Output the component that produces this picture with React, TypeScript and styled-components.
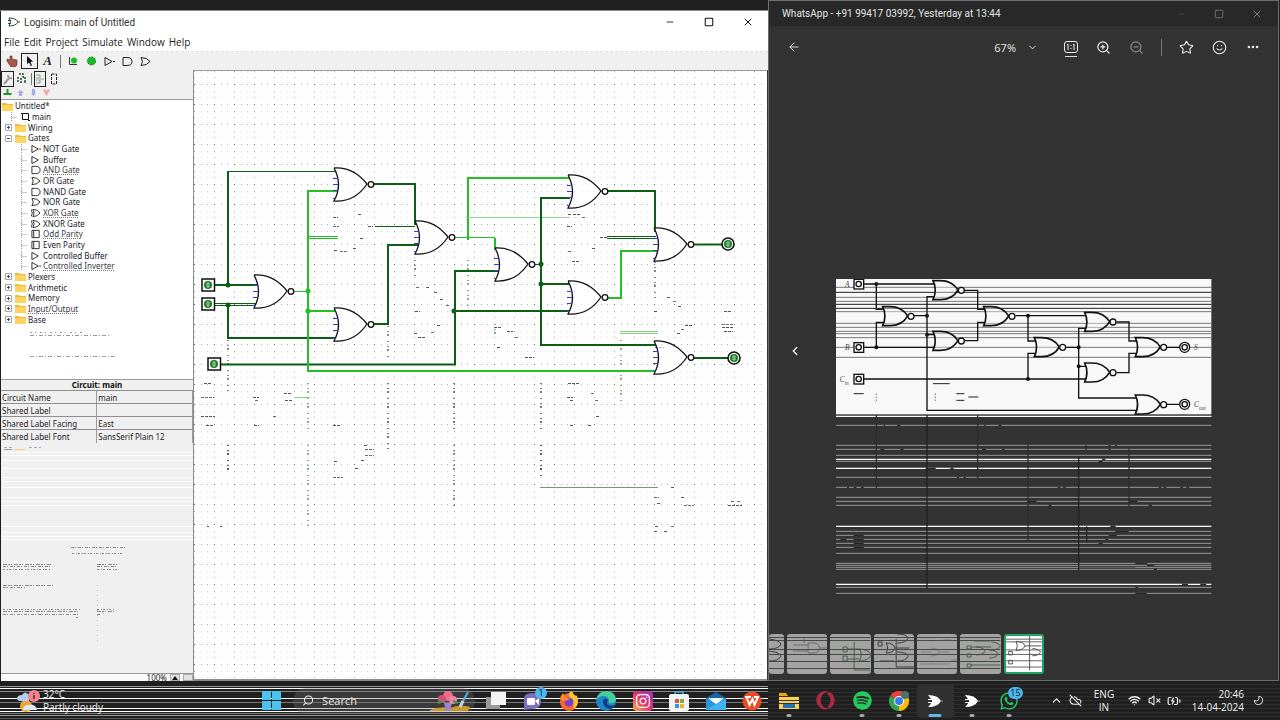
import React from "react";
import styled, { createGlobalStyle, css } from "styled-components";
import { FaSpotify, FaWhatsapp, FaInstagram, FaOpera } from "react-icons/fa";
import { ArrowLeft, ChevronDown, ChevronLeft, ChevronUp, ZoomIn, ZoomOut, Star, Smile, Ellipsis, CloudOff, Wifi, VolumeX, BatteryCharging, Moon, Search, X, Minus, Square } from "lucide-react";

const Global = createGlobalStyle`
  * { box-sizing: border-box; }
  body { margin: 0; background: #202020; font-family: "Open Sans", "Noto Sans", sans-serif; }
  button { font: inherit; color: inherit; background: none; border: 0; padding: 0; margin: 0; }
`;

const Desktop = styled.main`
  min-height: 100vh;
  display: flex;
  flex-direction: column;
  overflow: hidden;
`;
const Windows = styled.div`
  flex: 1;
  display: grid;
  grid-template-columns: 3fr 2fr;
`;

/* ---------- Logisim window ---------- */
const LeftColumn = styled.div`
  display: flex;
  flex-direction: column;
  min-width: 0;
`;
const Behind = styled.div`
  height: 11px;
  padding-left: 10px;
  overflow: hidden;
  background: #202020;
  border-bottom: 1px solid #8a8a8a;
`;
const LogisimWindow = styled.section`
  flex: 1;
  display: flex;
  flex-direction: column;
  margin-left: 1px;
  background: #fff;
  color: #222;
`;
const TitleBar = styled.header`
  height: 22px;
  display: flex;
  align-items: center;
  padding: 0 1px 0 7px;
  gap: 4px;
`;
const TitleText = styled.h1<{ $light?: boolean }>`
  margin: 0;
  flex: 1;
  white-space: nowrap;
  font: 400 10px Roboto, "Open Sans", sans-serif;
  color: ${(p) => (p.$light ? "#e4e4e4" : "#333")};
`;
const Controls = styled.div`
  display: flex;
`;
const WindowButton = styled.button<{ $dim?: boolean }>`
  width: ${(p) => (p.$dim ? 38 : 39)}px;
  height: 22px;
  display: grid;
  place-items: center;
  color: ${(p) => (p.$dim ? "#7a7a7a" : "#111")};
`;
const MenuBar = styled.nav`
  height: 19px;
  display: flex;
  gap: 4px;
  padding-left: 3px;
  align-items: center;
  font-size: 10px;
  border-bottom: 1px dashed #ddd;
`;
const ToolBar = styled.div<{ $h: number; $pad: number }>`
  height: ${(p) => p.$h}px;
  padding-left: ${(p) => p.$pad}px;
  display: flex;
  align-items: center;
  background: #f0f0f0;
`;
const Tool = styled.button<{ $w: number; $on?: boolean }>`
  width: ${(p) => p.$w}px;
  height: 16px;
  display: grid;
  place-items: center;
  ${(p) => p.$on && css`border: 1px solid #222;`}
`;
const TextGlyph = styled.span`
  font: italic bold 13px "Liberation Serif", serif;
`;
const Divider = styled.span<{ $w: number; $h: number }>`
  width: ${(p) => p.$w}px;
  height: ${(p) => p.$h}px;
  background: linear-gradient(#777, #777) center / 1px 100% no-repeat;
`;
const Body = styled.div`
  flex: 1;
  display: flex;
`;
const SidePanel = styled.aside`
  width: 193px;
  flex: none;
  display: flex;
  flex-direction: column;
  background: #f0f0f0;
  border-right: 1px solid #858c95;
  font-family: "Noto Sans", sans-serif;
  font-size: 8px;
`;
const TreeBox = styled.div`
  height: 281px;
  background: #fff;
  border-top: 1px solid #9a9a9a;
  border-bottom: 1px solid #9a9a9a;
  padding-top: 1px;
`;
const Tree = styled.ul`
  list-style: none;
  margin: 0;
  padding: 0;
  height: 224px;
  display: grid;
  grid-template-rows: repeat(21, minmax(0, 1fr));
`;
const TreeRow = styled.li<{ $level: number }>`
  display: flex;
  align-items: center;
  gap: 2px;
  padding-left: ${(p) => [1, 3, 13][p.$level]}px;
  line-height: 10px;
  white-space: nowrap;
  color: #20202c;
`;
const TreeName = styled.span<{ $worn?: boolean }>`
  ${(p) => p.$worn && css`
    text-decoration: underline dotted #777 1px;
    color: #3a3a44;
  `}
`;
const PropertyTable = styled.table`
  width: 100%;
  border-collapse: collapse;
  table-layout: fixed;
  caption {
    height: 10px;
    line-height: 10px;
    font-weight: 700;
    color: #111;
  }
  th, td {
    height: 13px;
    line-height: 11px;
    padding: 0 1px;
    border-top: 1px solid #8d8d8d;
    text-align: left;
    font-weight: 400;
    white-space: nowrap;
    color: #222;
  }
  td { border-left: 1px solid #9a9a9a; border-right: 1px solid #9a9a9a; }
`;
const PanelRest = styled.div`
  flex: 1;
  overflow: hidden;
  svg { display: block; }
`;
const ZoomBar = styled.footer`
  height: 8px;
  display: flex;
  justify-content: flex-end;
  gap: 3px;
  border-top: 1px solid #999;
  background: #fafafa;
  line-height: 7px;
`;
const ZoomStep = styled.button`
  width: 10px;
  height: 7px;
  display: grid;
  place-items: center;
  background: #e3e3e3;
  border: 1px solid #aaa;
`;
const Canvas = styled.div`
  flex: 1;
  display: flex;
  min-width: 0;
  border-top: 1px solid #9a9a9a;
  border-right: 1px solid #333;
  border-bottom: 2px solid #8c8c8c;
  svg { flex: 1; min-width: 0; display: block; }
`;

/* ---------- Picture viewer ---------- */
const Viewer = styled.section`
  display: flex;
  flex-direction: column;
  min-width: 0;
  margin-right: 1px;
  background: #333;
  color: #e8e8e8;
  border: 1px solid #6c6c6c;
`;
const ViewerTitle = styled.header`
  height: 26px;
  display: flex;
  align-items: center;
  background: #282828;
  border-bottom: 1px solid #303030;
  padding: 0 2px 0 13px;
`;
const ViewerTools = styled.div`
  height: 40px;
  display: flex;
  align-items: center;
  padding: 0 9px 0 8px;
`;
const Spacer = styled.span`
  flex: 1;
`;
const ZoomLevel = styled.div`
  display: flex;
  align-items: center;
  padding-right: 5px;
  font-size: 11px;
`;
const ViewerTool = styled.button<{ $dim?: boolean; $mark?: boolean }>`
  width: 33px;
  height: 20px;
  display: grid;
  place-items: center;
  color: ${(p) => (p.$dim ? "#8a8a8a" : "#eee")};
  ${(p) => p.$mark && css`background: linear-gradient(#ddd, #ddd) center bottom / 12px 1px no-repeat;`}
`;
const Stage = styled.div`
  flex: 1;
  display: grid;
  grid-template-columns: 52px 1fr 52px;
  align-items: start;
  justify-items: center;
  padding-top: 212px;
`;
const PrevButton = styled.button`
  width: 52px;
  height: 144px;
  display: grid;
  place-items: center;
`;
const FilmStrip = styled.div`
  width: 275px;
  height: 46px;
  display: grid;
  grid-template-columns: 15px repeat(6, 1fr);
  gap: 3px;
  padding-bottom: 6px;
`;
const Thumb = styled.button<{ $on?: boolean }>`
  overflow: hidden;
  border-radius: 3px;
  background: ${(p) => (p.$on ? "#fff" : "#a3a3a3")};
  ${(p) => p.$on && css`border: 2px solid #1fa463;`}
  svg { display: block; width: 100%; height: 100%; }
`;

/* ---------- Task bar ---------- */
const TaskBar = styled.footer`
  position: relative;
  height: 39px;
  display: flex;
  align-items: center;
  background: #202020;
  color: #f2f2f2;
  > * { position: relative; }
`;
const ScanLines = styled.div`
  && { position: absolute; }
  inset: 0 40% 0 0;
  svg { width: 100%; height: 100%; display: block; }
`;
const FaintLines = styled.div`
  && { position: absolute; }
  inset: 0 0 0 60%;
  background: repeating-linear-gradient(#0000 0 3px, #2e2e2e 3px 4px);
`;
const Weather = styled.button`
  width: 242px;
  padding-left: 17px;
  display: flex;
  gap: 3px;
  align-items: center;
  text-align: left;
  font-size: 10px;
  line-height: 13px;
`;
const StartButton = styled.button`
  width: 51px;
  display: grid;
  justify-items: end;
  padding-right: 12px;
`;
const SearchBox = styled.label`
  width: 182px;
  height: 26px;
  border-radius: 13px;
  display: flex;
  align-items: center;
  gap: 8px;
  padding: 0 4px 0 9px;
  background: #70707055;
  input {
    width: 100px;
    border: 0;
    padding: 0;
    background: none;
    font: 11px "Open Sans", sans-serif;
    color: #eee;
    outline: 0;
  }
  input::placeholder { color: #e6e6e6; opacity: 1; }
`;
const Apps = styled.div`
  width: 549px;
  display: grid;
  grid-template-columns: repeat(15, 1fr);
  margin-left: 3px;
`;
const AppButton = styled.button<{ $run?: boolean; $active?: boolean }>`
  position: relative;
  height: 34px;
  display: grid;
  place-items: center;
  border-radius: 4px;
  ${(p) => p.$active && css`background: #303030;`}
  &::after {
    content: "";
    position: absolute;
    bottom: 1px;
    left: 50%;
    transform: translateX(-50%);
    height: 3px;
    border-radius: 2px;
    width: ${(p) => (p.$active ? 13 : p.$run ? 5 : 0)}px;
    background: ${(p) => (p.$active ? "#60b8e8" : "#a8a8a8")};
  }
`;
const Badge = styled.span<{ $w: number }>`
  position: absolute;
  top: 3px;
  right: 4px;
  width: ${(p) => p.$w}px;
  height: 12px;
  border-radius: 6px;
  background: #4db4ec;
  color: #10222e;
  font-size: 9px;
  line-height: 12px;
  text-align: center;
`;
const Tray = styled.div`
  flex: 1;
  display: flex;
  justify-content: flex-end;
  align-items: center;
  padding-right: 16px;
  font-size: 10px;
  line-height: 13px;
`;
const TrayItem = styled.button<{ $w: number; $end?: boolean }>`
  width: ${(p) => p.$w}px;
  display: grid;
  justify-items: ${(p) => (p.$end ? "end" : "center")};
  white-space: nowrap;
`;

/* ---------- Drawings ---------- */
const miniShapes: Record<string, string> = {
  not: "M1 1 L8 5 L1 9 Z M9 5 h2",
  buf: "M1 1 L8 5 L1 9 Z",
  and: "M1 1 H5 Q10 1 10 5 Q10 9 5 9 H1 Z",
  or: "M1 1 Q7 1 10 5 Q7 9 1 9 Q4 5 1 1 Z",
  xor: "M2 1 Q7 1 10 5 Q7 9 2 9 Q5 5 2 1 M0 1 Q3 5 0 9",
  box: "M1 1 H9 V9 H1 Z M3 1 V9",
};
const Mini = ({ kind, size = 10 }: { kind: string; size?: number }) => (
  <svg width={size} height={size} viewBox="0 0 11 10" fill="none" stroke="#222" strokeWidth="1">
    <path d={miniShapes[kind]} />
  </svg>
);
const Folder = () => (
  <svg width="11" height="9" viewBox="0 0 11 9">
    <path d="M0 1 H4 L5 2 H11 V9 H0 Z" fill="#f0b93c" />
    <path d="M0 3 H11 V9 H0 Z" fill="#ffd45e" />
  </svg>
);
const Expander = ({ open }: { open?: boolean }) => (
  <svg width="9" height="9" viewBox="0 0 9 9" fill="none" stroke="#9ab">
    <path d="M1.500 1.500 H7.500 V7.500 H1.500 Z" />
    <path d={open ? "M3 4.500 H6" : "M3 4.500 H6 M4.500 3 V6"} stroke="#446" />
  </svg>
);
const Branch = () => (
  <svg width="15" height="10" viewBox="0 0 15 10" stroke="#999" strokeDasharray="1 1">
    <path d="M7.500 0 V10 M7.500 5.500 H13" fill="none" />
  </svg>
);

type Item = [number, string, string, boolean?];
const tree: Item[] = [
  [0, "root", "Untitled*"], [1, "main", "main"], [1, "folder", "Wiring"], [1, "open", "Gates"],
  [2, "not", "NOT Gate"], [2, "buf", "Buffer"], [2, "and", "AND Gate", true], [2, "or", "OR Gate"],
  [2, "and", "NAND Gate"], [2, "or", "NOR Gate"], [2, "xor", "XOR Gate", true], [2, "xor", "XNOR Gate"],
  [2, "box", "Odd Parity", true], [2, "box", "Even Parity"], [2, "buf", "Controlled Buffer"],
  [2, "not", "Controlled Inverter", true], [1, "folder", "Plexers"], [1, "folder", "Arithmetic"],
  [1, "folder", "Memory"], [1, "folder", "Input/Output", true], [1, "folder", "Base"],
];
const properties = [["Circuit Name", "main"], ["Shared Label", ""], ["Shared Label Facing", "East"], ["Shared Label Font", "SansSerif Plain 12"]];

const DARK = "#0b5e14";
const LIVE = "#22c022";
const wires: [string, string, number?][] = [
  [DARK, "M214 285 H257"], [DARK, "M228 172 V285"], [DARK, "M227 171.500 H337", 1],
  [DARK, "M214 303.500 H256 M214 305.500 H256", 1], [DARK, "M228 304 V338 H336"],
  [DARK, "M221 364.500 H455 V271 H498"], [DARK, "M455 311 H570"],
  [LIVE, "M294 291.500 H308", 1], [LIVE, "M338 191 H308 V371 H656"], [LIVE, "M308 311 H335"],
  [LIVE, "M308 236.500 H338 M308 238.500 H338", 1],
  [DARK, "M374 184 H415 V225"], [DARK, "M375 226.500 H415", 1], [DARK, "M374 324 H388 V245 H418"],
  [LIVE, "M454 237.500 H495", 1], [LIVE, "M495 238 V250"], [LIVE, "M468 240 V178 H570"],
  ["#8adb8a", "M468 217.500 H570", 1], [DARK, "M534 264.500 H541", 1],
  [DARK, "M570 198 H541 V345 H656"], [DARK, "M541 284 H569"],
  [DARK, "M607 191 H655 V232"], [LIVE, "M607 298 H621 V251 H658"],
  [DARK, "M607 236.500 H656 M607 238.500 H656", 1], [DARK, "M694 244.500 H722"], [DARK, "M694 358 H728"],
  ["#7fd37f", "M620 331.500 H658 M620 333.500 H658", 1], ["#6f9c72", "M540 487.500 H658", 1],
  ["#7fd37f", "M294 397.500 H310", 1],
];
const gates = [[254, 275], [334, 168], [334, 308], [415, 221], [495, 248], [568, 175], [568, 281], [654, 228], [654, 341]];
const trails: [string, number, number, number][] = [
  ["#7a8f7c", 228, 340, 392], ["#4d6b50", 228, 445, 470], ["#6fbf6f", 308, 383, 430], ["#6fbf6f", 308, 445, 527],
  ["#777", 388, 383, 450], ["#777", 454, 383, 430], ["#7a8f7c", 454, 445, 506], ["#777", 541, 383, 430],
  ["#4d6b50", 541, 445, 478], ["#7a8f7c", 415, 260, 280], ["#6fbf6f", 468, 260, 311], ["#7a8f7c", 655, 262, 300],
  ["#7a8f7c", 388, 326, 360], ["#6fbf6f", 621, 340, 402], ["#6fbf6f", 495, 324, 336],
];
const fragments: [number, number, number][] = [
  [333, 226, 6], [333, 217, 5], [358, 214, 3], [334, 250, 3], [340, 251, 7], [353, 248, 3], [360, 238, 3], [368, 226, 5],
  [416, 287, 3], [426, 287, 3], [434, 292, 3], [440, 299, 3], [446, 305, 3], [415, 311, 5], [414, 333, 4], [418, 337, 7], [431, 332, 4], [437, 325, 3],
  [568, 214, 3], [573, 214, 7], [582, 217, 4], [567, 226, 5], [600, 237, 8], [592, 248, 3], [568, 251, 3], [572, 261, 7],
  [494, 327, 8], [507, 331, 6], [515, 337, 3], [497, 347, 3], [525, 357, 9],
  [667, 297, 4], [673, 301, 4], [678, 306, 4], [654, 311, 4], [685, 325, 8], [681, 329, 4], [677, 333, 4], [655, 347, 9],
  [724, 311, 7], [722, 324, 12], [722, 327, 12], [724, 331, 9],
  [204, 383, 7], [201, 397, 13], [201, 416, 14], [206, 425, 8], [253, 397, 6], [255, 400, 3], [254, 425, 5], [284, 393, 8], [285, 400, 8], [273, 416, 3],
  [333, 425, 8], [364, 445, 4], [365, 449, 9], [365, 455, 9], [361, 460, 3], [334, 461, 4], [355, 468, 3], [333, 477, 10],
  [568, 383, 11], [567, 397, 6], [570, 400, 3], [595, 400, 3], [596, 416, 3], [570, 425, 3], [588, 425, 3], [591, 393, 3],
  [671, 487, 3], [654, 497, 5], [681, 497, 3], [684, 505, 10], [657, 503, 3], [728, 505, 14], [731, 501, 3], [737, 501, 3],
  [207, 526, 2], [220, 526, 2], [655, 526, 3], [671, 526, 3], [654, 531, 3], [664, 531, 4],
];
const pins = [[208, 285], [208, 304], [214, 364]];
const leds = [[728, 244], [734, 358]];
const nodes: [number, number, string][] = [[228, 285, DARK], [228, 305, DARK], [308, 291, LIVE], [308, 311, LIVE], [454, 311, DARK], [541, 264, DARK], [541, 284, DARK]];

const Schematic = () => (
  <svg width="100%" role="img" aria-label="Circuit canvas">
    <defs>
      <pattern id="grid" width="20" height="20" patternUnits="userSpaceOnUse" x="194" y="4">
        {[0, 7, 13].map((y) => [0, 7, 13].map((x) => (
          <rect key={`${x}-${y}`} x={x} y={y} width="1" height="1" fill={x === 0 && y === 0 ? "#6d6d6d" : x === 0 || y === 0 ? "#b0b0b0" : "#dcdcdc"} />
        )))}
      </pattern>
    </defs>
    <g transform="translate(-194 -71)" fill="none">
      <rect x="194" y="71" width="100%" height="100%" fill="url(#grid)" />
      {trails.map(([c, x, a, b], i) => <path key={i} d={`M${x} ${a} V${b}`} stroke={c} strokeWidth="2" strokeDasharray="1 4 1 2 2 5" />)}
      {fragments.map(([x, y, w], i) => <path key={i} d={`M${x} ${y + 0.5} h${w}`} stroke={i % 4 === 0 ? "#6a6a8c" : "#555"} strokeDasharray="3 1" />)}
      {wires.map(([c, d, w], i) => <path key={i} d={d} stroke={c} strokeWidth={w ?? 2} />)}
      {nodes.map(([x, y, c], i) => <circle key={i} cx={x} cy={y} r="2.500" fill={c} />)}
      {gates.map(([x, y], i) => (
        <g key={i} transform={`translate(${x} ${y})`}>
          <path d="M0 0 C14 -1 25 6 33 16 C25 28 14 34 0 33 C6 22 6 11 0 0" fill="#fff" fillOpacity="0.600" stroke="#111" strokeWidth="1.300" />
          <path d="M-1 10.500 h5 M-1 16.500 h5 M-1 22.500 h5 M-1 30.500 h3" stroke="#3a3ad8" strokeWidth="1.200" />
          <circle cx="37" cy="16.500" r="2.800" fill="#fff" stroke="#111" strokeWidth="1.300" />
        </g>
      ))}
      {pins.map(([x, y], i) => (
        <g key={i}>
          <rect x={x - 6} y={y - 6} width="12.500" height="12" fill="#fff" stroke="#111" strokeWidth="1.500" />
          <circle cx={x} cy={y} r="4" fill="#1b7a26" />
          <path d={`M${x - 1} ${y - 2} h2 v4 h-2 Z`} stroke="#d8f0d8" strokeWidth="0.800" />
        </g>
      ))}
      {leds.map(([x, y], i) => (
        <g key={i}>
          <circle cx={x} cy={y} r="6" fill="#fff" stroke="#111" strokeWidth="1.600" />
          <circle cx={x} cy={y} r="4" fill="#1b7a26" />
          <path d={`M${x - 1} ${y - 2} h2 v4 h-2 Z`} stroke="#d8f0d8" strokeWidth="0.800" />
        </g>
      ))}
    </g>
  </svg>
);

const photoGates = [[187, 110], [338, 32], [338, 184], [490, 110], [642, 203], [793, 127], [793, 279], [945, 203], [945, 375]];
const photoPins = [[115, 42], [115, 232], [115, 327]];
const photoNodes = [[168, 42], [168, 232], [320, 137], [320, 194], [623, 137], [623, 327], [775, 232], [775, 289]];
const greyLines = [466, 526, 538, 556, 574, 622, 652, 682, 694, 706, 784, 796, 808, 820, 832, 850, 880, 886, 892, 898, 952, 970];
const whiteLines = [439, 568, 595, 769, 943];
const Photo = () => (
  <svg width="376" height="316" viewBox="47 27 1128 948" role="img" aria-label="Full adder built from NOR gates">
    <rect x="47" y="27" width="1126" height="406" fill="#f8f8f8" />
    <g fill="none" strokeWidth="3">
      {[52, 82, 94, 125, 160, 172, 184, 191, 203, 232, 262].map((y) => <path key={y} d={`M47 ${y} H1173`} stroke="#777" />)}
      {[67, 103, 115].map((y) => <path key={y} d={`M47 ${y} H1173`} stroke="#222" />)}
      {greyLines.map((y) => <path key={y} d={`M47 ${y} H1173`} stroke="#999" />)}
      {whiteLines.map((y) => <path key={y} d={`M47 ${y} H1173`} stroke="#fff" strokeWidth="4" />)}
      <path d="M338 341 H388 M100 371 H130 M408 371 H432 M444 381 H474 M408 391 H432" stroke="#222" />
      <path d="M168 371 V395 M345 371 V395" stroke="#333" strokeDasharray="3 6" />
      <path d="M168 435 V655 M472 435 V625 M623 520 V815 M926 535 V710" stroke="#2d2d2d" strokeWidth="4" />
      <path d="M320 435 V955 M775 560 V900" stroke="#222" strokeWidth="4" />
      <path d="M190 466 h4 M230 466 h10 M492 466 h4 M535 466 h8 M180 538 h12 M240 538 h10 M485 538 h12 M545 538 h8 M316 595 h30 M390 595 h10 M410 622 h6 M430 622 h6 M80 652 h6 M100 652 h8 M122 652 h8 M712 652 h8 M728 652 h8 M1015 652 h8 M1030 652 h8 M1080 652 h8 M1098 652 h8 M622 694 h26 M925 694 h26 M685 706 h8 M985 706 h10 M865 526 h6 M884 526 h5 M865 538 h6 M845 568 h10 M835 574 h12 M885 784 h40 M870 769 h16 M865 796 h24 M797 526 v14 M799 769 v50 M855 808 h8 M835 820 h12 M100 796 h30 M60 808 h18 M100 808 h30 M100 820 h30 M100 832 h30 M945 880 h36 M980 886 h22 M1000 898 h10 M945 970 h34 M945 952 h8 M1085 943 h18 M1140 943 h18" stroke="#262626" strokeWidth="4" />
      <path d="M775 892 H945" stroke="#555" />
    </g>
    <g fill="none" stroke="#111" strokeWidth="4">
      <path d="M130 42 H345 M168 42 V118 H192 M168 232 V157 H192 M130 232 H345" />
      <path d="M281 137 H320 M343 80 H320 V421 H950 M320 194 H343" />
      <path d="M434 61 H472 V118 H495 M434 212 H472 V157 H495" />
      <path d="M586 137 H798 M623 137 V213 H648 M130 327 H798 M623 327 V250 H648" />
      <path d="M738 232 H775 M798 175 H775 V384 H950 M775 289 H798" />
      <path d="M889 156 H926 V213 H950 M889 308 H926 V250 H950 M1040 232 H1078 M1040 403 H1078" />
      {photoGates.map(([x, y], i) => (
        <g key={i} transform={`translate(${x} ${y})`}>
          <path d="M0 0 H22 C48 0 65 12 75 28 C65 45 48 57 22 57 H0 C9 38 9 19 0 0 Z" fill="#f8f8f8" fillOpacity="0.400" strokeWidth="5" />
          <circle cx="85" cy="29" r="9" fill="#f8f8f8" />
        </g>
      ))}
      {photoPins.map(([x, y], i) => <g key={i}><rect x={x - 14} y={y - 14} width="29" height="29" fill="#f8f8f8" /><circle cx={x} cy={y} r="8" /></g>)}
      {[[1093, 232], [1093, 403]].map(([x, y], i) => <g key={i}><circle cx={x} cy={y} r="15" fill="#f8f8f8" /><circle cx={x} cy={y} r="8" /></g>)}
      {photoNodes.map(([x, y], i) => <circle key={i} cx={x} cy={y} r="4" />)}
    </g>
    <g fill="#444" fontFamily="Liberation Serif, serif" fontStyle="italic" fontSize="22">
      <text x="74" y="50">A</text>
      <text x="74" y="240">B</text>
      <text x="58" y="335">C<tspan fontSize="16" dy="9">in</tspan></text>
      <text x="1121" y="240">S</text>
      <text x="1121" y="410">C<tspan fontSize="16" dy="9">out</tspan></text>
    </g>
  </svg>
);

const thumbPaths = [
  "M0 5 Q10 6 12 10 Q10 15 0 15 M0 17 Q10 18 12 22 Q10 27 0 27",
  "M21 9 h5 q6 0 6 5 t-6 5 h-5 Z M6 11 h15 M6 17 h15 M32 14 h8 M17 4 v5",
  "M29 15 q9 0 12 6 q-3 6 -12 6 q4 -6 0 -12 M13 13 h4 v5 h-4 Z M13 22 h4 v5 h-4 Z M17 15 h12 M17 25 h12 M24 8 v28 h16",
  "M12 9 q7 0 9 5 q-2 5 -9 5 q3 -5 0 -10 M23 0 q9 0 11 4 q-2 5 -11 5 M23 18 q9 0 11 4 q-2 5 -11 5 M21 14 h14 M4 8 h4 v4 h-4 Z M22 5 v28 h18 M6 27 h14",
  "M14 14 q6 0 8 4 q-2 4 -8 4 M4 18 h10 M22 18 h10 M26 6 h8 M3 30 h30 M34 26 h6",
  "M16 13 q7 0 9 4 q-2 4 -9 4 M31 8 q7 0 9 4 q-2 4 -9 4 M29 16 q7 0 9 4 q-2 4 -9 4 M7 12 h4 v3 h-4 Z M7 20 h4 v3 h-4 Z M7 30 h4 v3 h-4 Z M11 13 h20 M11 31 h29 M14 7 h16",
  "M11 6 q8 0 10 5 q-2 5 -10 5 q3 -5 0 -10 M29 14 q7 0 9 4 q-2 4 -9 4 M3 17 h4 v4 h-4 Z M3 27 h4 v4 h-4 Z M26 0 v38 M21 11 h18",
];
const ThumbArt = ({ n }: { n: number }) => (
  <svg viewBox={n ? "0 0 40 40" : "0 0 15 40"} preserveAspectRatio="none" fill="none">
    <path d={thumbPaths[n]} stroke={["#333", "#666", "#41593f", "#333", "#7a7a7a", "#41593f", "#333"][n]} strokeWidth="0.900" />
    <path d="M0 3.500 H40 M0 6.500 H40 M0 15.500 H40 M0 20.500 H40 M0 27.500 H40 M0 34.500 H40" stroke={n === 6 ? "#555" : "#484848"} />
  </svg>
);

const NorLogo = () => (
  <svg width="16" height="12" viewBox="0 0 16 12"><path d="M1 0 Q11 0 14 6 Q11 12 1 12 Q4 9 4 8 H1 V7 H5 V5 H1 V4 H4 Z" fill="#fff" /><path d="M14 6 h2" stroke="#888" /></svg>
);
const Chrome = () => (
  <svg width="20" height="20" viewBox="0 0 20 20">
    <path d="M10 10 L1.300 5 A10 10 0 0 1 18.700 5 Z" fill="#e94235" />
    <path d="M10 10 L18.700 5 A10 10 0 0 1 10 20 Z" fill="#fbbd0a" />
    <path d="M10 10 L10 20 A10 10 0 0 1 1.300 5 Z" fill="#34a352" />
    <circle cx="10" cy="10" r="5" fill="#fff" /><circle cx="10" cy="10" r="4" fill="#3b7ded" />
    <circle cx="16" cy="4" r="4" fill="#4c7372" />
  </svg>
);
const appIcons: { name: string; icon: React.ReactNode; run?: boolean; active?: boolean; badge?: string }[] = [
  { name: "Task view", icon: <svg width="20" height="20"><rect x="0" y="6" width="14" height="12" fill="#9a9a9a" /><rect x="5" y="1" width="15" height="13" fill="#f4f4f4" /></svg> },
  { name: "Chat", badge: "1", icon: <svg width="20" height="20"><path d="M1 19 V8 Q1 2 9 2 Q18 2 18 10 Q18 18 9 18 Z" fill="#7c6cc4" /><rect x="4" y="7" width="8" height="7" rx="1" fill="#fff" /><path d="M12 10 l4 -3 v7 Z" fill="#fff" /></svg> },
  { name: "Firefox", icon: <svg width="20" height="20"><circle cx="10" cy="11" r="9" fill="#f9682b" /><path d="M10 2 L13 0 L15 4 L18 5 Q21 14 14 18 Q16 10 10 8 Z" fill="#fdc52d" /><circle cx="10" cy="11" r="4.500" fill="#7a3fd0" /><path d="M1 8 Q2 4 4 2 L6 6 L11 8 Q8 10 5 10 Z" fill="#fb8d22" /></svg> },
  { name: "Edge", icon: <svg width="20" height="20"><circle cx="10" cy="10" r="10" fill="#1d85cc" /><path d="M0 9 Q2 0 11 0 Q20 1 20 9 Q19 13 13 12 Q14 6 8 5 Q3 5 0 9" fill="#45cf9c" /><path d="M7 9 Q6 16 14 18 Q18 17 19 14 Q14 16 11 13 Q11 10 12 9 Q10 6 7 9" fill="#10407c" /></svg> },
  { name: "Instagram", icon: <svg width="20" height="20"><defs><linearGradient id="insta" x1="0" y1="1" x2="1" y2="0"><stop offset="0" stopColor="#fcb045" /><stop offset="0.500" stopColor="#e1306c" /><stop offset="1" stopColor="#8a3ac8" /></linearGradient></defs><rect width="20" height="20" rx="4" fill="url(#insta)" /><FaInstagram x="2" y="2" size={16} color="#fff" /></svg> },
  { name: "Store", icon: <svg width="20" height="20"><path d="M6 5 V1 H14 V5" fill="none" stroke="#40b4e8" strokeWidth="1.500" /><rect y="3" width="20" height="17" rx="2" fill="#f3f3f3" /><path d="M6 8 h4 v4 h-4Z" fill="#e2523a" /><path d="M11 8 h4 v4 h-4Z" fill="#7cb332" /><path d="M6 13 h4 v4 h-4Z" fill="#2f9ce0" /><path d="M11 13 h4 v4 h-4Z" fill="#f2b32a" /></svg> },
  { name: "Mail", icon: <svg width="20" height="20"><path d="M0 7 L10 1 L20 7 V19 H0 Z" fill="#1563a8" /><path d="M2 7 H18 L10 14 Z" fill="#f2f8fc" /><path d="M0 7 L20 19 H0 Z" fill="#2596dc" /><path d="M20 7 L0 19 H20 Z" fill="#3fb4ee" /></svg> },
  { name: "WPS Office", icon: <svg width="20" height="20"><circle cx="10" cy="10" r="9.500" fill="#ec4b23" /><path d="M3 6 H9 M4.500 6 L7.500 14 L10.500 8 L12.500 14 L16 6 H12" fill="none" stroke="#fff" strokeWidth="2" /></svg> },
  { name: "File Explorer", run: true, icon: <svg width="20" height="18"><path d="M0 1 H7 L9 4 H20 V17 H0Z" fill="#e9a820" /><path d="M0 5 H20 V17 H0Z" fill="#fbd152" /><rect x="4" y="12" width="12" height="4" fill="#2372b4" /><path d="M0 4.500 H20 M0 8.500 H20 M0 11.500 H20" stroke="#333" /></svg> },
  { name: "Opera", icon: <FaOpera size={19} color="#a82a46" /> },
  { name: "Spotify", run: true, icon: <FaSpotify size={19} color="#24cc5c" /> },
  { name: "Chrome", run: true, icon: <Chrome /> },
  { name: "Logisim", active: true, icon: <NorLogo /> },
  { name: "Logisim circuit", run: true, icon: <NorLogo /> },
  { name: "WhatsApp", run: true, badge: "15", icon: <FaWhatsapp size={20} color="#25c768" /> },
];

const TreeLine = ({ item: [level, kind, name, worn] }: { item: Item }) => (
  <TreeRow $level={level}>
    {level === 0 && <Folder />}
    {level === 1 && kind !== "main" && <><Expander open={kind === "open"} /><Folder /></>}
    {level === 1 && kind === "main" && <><Branch /><svg width="9" height="9"><path d="M1.500 1.500 h6 v6 h-6 Z M0 1.500 h2 M7 8.500 h2" fill="none" stroke="#111" /></svg></>}
    {level === 2 && <><Branch /><Mini kind={kind} /></>}
    <TreeName $worn={worn}>{name}</TreeName>
  </TreeRow>
);

const panelWhite = [452, 455, 460, 468, 477, 481, 487, 497, 501, 505, 526, 532, 536, 539];
const panelGhosts: [number, number, number][] = [
  [71, 547, 54], [72, 553, 52], [3, 564, 48], [3, 566, 48], [3, 569, 48], [97, 564, 20], [97, 566, 20], [97, 569, 20],
  [3, 585, 50], [3, 587, 22], [3, 609, 77], [3, 611, 77], [3, 614, 77], [97, 609, 17], [97, 611, 17], [97, 614, 3], [76, 617, 4],
];

export default function App() {
  return (
    <>
      <Global />
      <Desktop>
        <Windows>
          <LeftColumn>
            <Behind><svg width="80" height="10"><path d="M0.500 3 V10" stroke="#3d9b78" /><path d="M10 5.500 H58 M10 8.500 H58" stroke="#777" strokeDasharray="3 2 1 2" /></svg></Behind>
            <LogisimWindow>
              <TitleBar>
                <svg width="12" height="10" viewBox="0 0 12 10" fill="none" stroke="#234c2a"><path d="M1 1 Q8 1 10 5 Q8 9 1 9 Q4 5 1 1 M0 3.500 H3 M0 6.500 H3 M10 5 h2" /></svg>
                <TitleText>Logisim: main of Untitled</TitleText>
                <Controls>
                  <WindowButton aria-label="Minimize"><Minus size={10} strokeWidth={2} /></WindowButton>
                  <WindowButton aria-label="Maximize"><Square size={10} strokeWidth={2.5} /></WindowButton>
                  <WindowButton aria-label="Close"><X size={12} strokeWidth={2} /></WindowButton>
                </Controls>
              </TitleBar>
              <MenuBar>
                {["File", "Edit", "Project", "Simulate", "Window", "Help"].map((m) => <button key={m}>{m}</button>)}
              </MenuBar>
              <ToolBar $h={18} $pad={2}>
                <Tool $w={18} aria-label="Poke"><svg width="12" height="12"><path d="M1 4 L4 5 V1 H6 V4 L11 5 V10 L9 12 H5 L1 6 Z" fill="#a45a48" stroke="#5d2d22" strokeWidth="0.600" /></svg></Tool>
                <Tool $w={17} $on aria-label="Select"><svg width="8" height="12"><path d="M1 1 V9 L3 7.500 L5 11 L6 10.500 L4.500 7 L7 6.500 Z" fill="#111" /></svg></Tool>
                <Tool $w={19} aria-label="Text"><TextGlyph>A</TextGlyph></Tool>
                <Divider $w={7} $h={13} />
                <Tool $w={18} aria-label="Input pin"><svg width="11" height="10"><path d="M1.500 1 V8.500 H9" stroke="#333" fill="none" /><circle cx="6" cy="4.500" r="3" fill="#12c021" /></svg></Tool>
                <Tool $w={18} aria-label="Output pin"><svg width="11" height="10"><circle cx="5.500" cy="5" r="4" fill="#12c021" stroke="#3c6b3c" strokeDasharray="2 1" /></svg></Tool>
                <Tool $w={19} aria-label="NOT gate"><Mini kind="not" size={11} /></Tool>
                <Tool $w={17} aria-label="AND gate"><Mini kind="and" size={11} /></Tool>
                <Tool $w={19} aria-label="OR gate"><Mini kind="or" size={11} /></Tool>
              </ToolBar>
              <Body>
                <SidePanel>
                  <ToolBar $h={17} $pad={0}>
                    <Tool $w={13} $on aria-label="Toolbox"><svg width="10" height="12"><path d="M1 11 L6 5 M5 2 Q5 6 9 5" stroke="#9a9a9a" strokeWidth="2" fill="none" /></svg></Tool>
                    <Tool $w={14} aria-label="Simulation"><svg width="11" height="12"><path d="M3 1 h4 v3 h2 v4 M2 4 v6 M5 5 v6 M9 8 v3" stroke="#234c2a" fill="none" strokeDasharray="2 1" strokeWidth="1.500" /></svg></Tool>
                    <Divider $w={6} $h={12} />
                    <Tool $w={12} $on aria-label="Edit circuit"><svg width="10" height="12"><path d="M1 2 h4 v3 h-4 M1 7 h4 v3 h-4 M5 6 h4" stroke="#86a086" fill="none" /></svg></Tool>
                    <Tool $w={15} aria-label="Edit appearance"><svg width="8" height="12"><path d="M1.500 1 H6.500 V11 H1.500 Z" stroke="#222" fill="none" strokeDasharray="3 1" /></svg></Tool>
                  </ToolBar>
                  <ToolBar $h={12} $pad={0}>
                    {["#23902f", "#aaa9ea", "#aaa9ea", "#efa9a4"].map((c, i) => (
                      <Tool key={i} $w={13} aria-label={["Add circuit", "Move up", "Move down", "Remove"][i]}>
                        <svg width="9" height="8"><path d={["M3.500 0 h2 v4 h3 v2 h-8 v-2 h3 Z", "M4.500 1 L8 4 H6 V7 H3 V4 H1 Z", "M3 0 h3 v4 h1 L4.500 7 L2 4 h1 Z", "M1 1 L3 0 L4.500 2 L6 0 L8 1 L4.500 7 Z"][i]} fill={c} /></svg>
                      </Tool>
                    ))}
                  </ToolBar>
                  <TreeBox>
                    <Tree>{tree.map((t) => <TreeLine key={t[2]} item={t} />)}</Tree>
                    <svg width="190" height="48" fill="none" stroke="#999">
                      <path d="M29 7.500 H84" strokeDasharray="2 3 1 4" /><path d="M29 10.500 H110 M29 31.500 H114" strokeDasharray="4 2 1 2" />
                    </svg>
                  </TreeBox>
                  <PropertyTable>
                    <caption>Circuit: main</caption>
                    <tbody>
                      {properties.map(([k, v]) => <tr key={k}><th scope="row">{k}</th><td>{v}</td></tr>)}
                    </tbody>
                  </PropertyTable>
                  <PanelRest>
                    <svg width="192" height="220" fill="none">
                      <g transform="translate(-1 -443)">
                        <path d="M4 447.500 h8 M29 447.500 h12" stroke="#aaa" strokeDasharray="3 2" /><path d="M4 449.500 h8" stroke="#999" /><path d="M15 449.500 h10" stroke="#f0c878" />
                        {panelWhite.map((y) => <path key={y} d={`M2 ${y + 0.5} H193`} stroke="#fff" />)}
                        {panelGhosts.map(([x, y, w], i) => <path key={i} d={`M${x} ${y + 0.5} h${w}`} stroke="#888" strokeDasharray={["3 1 1 2", "2 2 1 1", "4 1 2 1 1 2"][i % 3]} />)}
                        <path d="M97.500 585 V645" stroke="#bbb" strokeDasharray="1 4" />
                      </g>
                    </svg>
                  </PanelRest>
                  <ZoomBar>
                    <span>100%</span>
                    <ZoomStep aria-label="Zoom in"><svg width="6" height="4"><path d="M0 4 L3 0 L6 4 Z" fill="#111" /></svg></ZoomStep>
                    <ZoomStep aria-label="Toggle grid" />
                  </ZoomBar>
                </SidePanel>
                <Canvas><Schematic /></Canvas>
              </Body>
            </LogisimWindow>
          </LeftColumn>

          <Viewer>
            <ViewerTitle>
              <TitleText $light>WhatsApp - +91 99417 03992, Yesterday at 13:44</TitleText>
              <WindowButton $dim aria-label="Minimize"><Minus size={8} strokeWidth={1} /></WindowButton>
              <WindowButton $dim aria-label="Maximize"><Square size={10} strokeWidth={2} /></WindowButton>
              <WindowButton $dim aria-label="Close"><X size={12} strokeWidth={2} /></WindowButton>
            </ViewerTitle>
            <ViewerTools>
              <ViewerTool aria-label="Back"><ArrowLeft size={14} strokeWidth={1.5} /></ViewerTool>
              <Spacer />
              <ZoomLevel>
                <span>67%</span>
                <ViewerTool aria-label="Zoom level"><ChevronDown size={11} strokeWidth={2} /></ViewerTool>
              </ZoomLevel>
              <ViewerTool $mark aria-label="Actual size">
                <svg width="14" height="12" viewBox="0 0 14 12" fill="none" stroke="#eee"><rect x="0.500" y="0.500" width="13" height="11" rx="2.500" /><path d="M4 3 V9 M10 3 V9 M7 4 V5 M7 7 V8 M3 3.500 h1 M9 3.500 h1" /></svg>
              </ViewerTool>
              <ViewerTool aria-label="Zoom in"><ZoomIn size={15} strokeWidth={2} /></ViewerTool>
              <ViewerTool $dim aria-label="Zoom out"><ZoomOut size={15} strokeWidth={2} /></ViewerTool>
              <Divider $w={17} $h={17} />
              <ViewerTool aria-label="Star"><Star size={15} strokeWidth={1.75} /></ViewerTool>
              <ViewerTool aria-label="React"><Smile size={15} strokeWidth={1.75} /></ViewerTool>
              <ViewerTool aria-label="More"><Ellipsis size={14} strokeWidth={2.5} /></ViewerTool>
            </ViewerTools>
            <Stage>
              <PrevButton aria-label="Previous"><ChevronLeft size={14} strokeWidth={2.5} /></PrevButton>
              <Photo />
            </Stage>
            <FilmStrip>
              {thumbPaths.map((_, i) => <Thumb key={i} $on={i === 6} aria-label={`Picture ${i + 1}`}><ThumbArt n={i} /></Thumb>)}
            </FilmStrip>
          </Viewer>
        </Windows>

        <TaskBar>
          <ScanLines>
            <svg fill="none">
              {[[5, "#999"], [7, "#fff"], [10, "#888"], [17, "#fff"], [21, "#777"], [27, "#fff"], [30, "#fff"], [32, "#777"], [34, "#999"], [37, "#555"]].map(([y, c]) => (
                <rect key={y} y={y} width="100%" height="1" fill={String(c)} />
              ))}
            </svg>
          </ScanLines>
          <FaintLines />
          <Weather>
            <svg width="23" height="24">
              <circle cx="9" cy="17" r="6" fill="#f0a63a" /><path d="M0 10 Q0 6 5 6 Q8 1 12 6 V12 H2 Z" fill="#b5cdf2" /><path d="M6 21 Q6 16 12 16 Q19 15 20 21 Z" fill="#dce8f8" />
              <circle cx="17" cy="7" r="6" fill="#f2868f" /><path d="M17 4 v1 M17 6 v4" stroke="#70202a" strokeWidth="1.500" />
            </svg>
            <span>32°C<br />Partly cloudy</span>
          </Weather>
          <StartButton aria-label="Start">
            <svg width="19" height="19"><path d="M0 0 h9 v9 h-9Z M10 0 h9 v9 h-9Z M0 10 h9 v9 h-9Z M10 10 h9 v9 h-9Z" fill="#4cc2f1" /></svg>
          </StartButton>
          <SearchBox>
            <Search size={13} strokeWidth={2} transform="scale(-1 1)" />
            <input placeholder="Search" aria-label="Search" />
            <svg width="44" height="20">
              <path d="M0 19 Q10 15 20 17 Q30 13 40 16 L38 20 H0 Z" fill="#c99a2c" /><path d="M14 12 h8 l-2 8 h-4 Z" fill="#9b83d6" />
              <circle cx="18" cy="5" r="5" fill="#ef6f8b" /><circle cx="12" cy="8" r="4" fill="#d94f74" /><circle cx="23" cy="9" r="4" fill="#e887a0" />
              <path d="M8 12 l5 -2 M28 12 l-5 -2" stroke="#3f9b50" strokeWidth="2" /><path d="M38 1 L32 12" stroke="#4fb3df" strokeWidth="2" /><path d="M33 10 L30 16" stroke="#c8d2d8" strokeWidth="3" />
            </svg>
          </SearchBox>
          <Apps>
            {appIcons.map((a) => (
              <AppButton key={a.name} $run={a.run} $active={a.active} aria-label={a.name}>
                {a.icon}
                {a.badge && <Badge $w={a.badge.length > 1 ? 15 : 12}>{a.badge}</Badge>}
              </AppButton>
            ))}
          </Apps>
          <Tray>
            <TrayItem $w={20} aria-label="Hidden icons"><ChevronUp size={13} strokeWidth={2} /></TrayItem>
            <TrayItem $w={18} aria-label="Cloud"><CloudOff size={13} strokeWidth={2} /></TrayItem>
            <TrayItem $w={40}><span>ENG</span><span>IN</span></TrayItem>
            <TrayItem $w={20} aria-label="Network"><Wifi size={13} strokeWidth={2.5} /></TrayItem>
            <TrayItem $w={20} aria-label="Volume"><VolumeX size={13} strokeWidth={2} /></TrayItem>
            <TrayItem $w={20} aria-label="Battery"><BatteryCharging size={14} strokeWidth={2} /></TrayItem>
            <TrayItem $w={60} $end><span>20:46</span><span>14-04-2024</span></TrayItem>
            <TrayItem $w={20} $end aria-label="Do not disturb"><Moon size={11} strokeWidth={2} transform="scale(-1 1)" /></TrayItem>
          </Tray>
        </TaskBar>
      </Desktop>
    </>
  );
}
